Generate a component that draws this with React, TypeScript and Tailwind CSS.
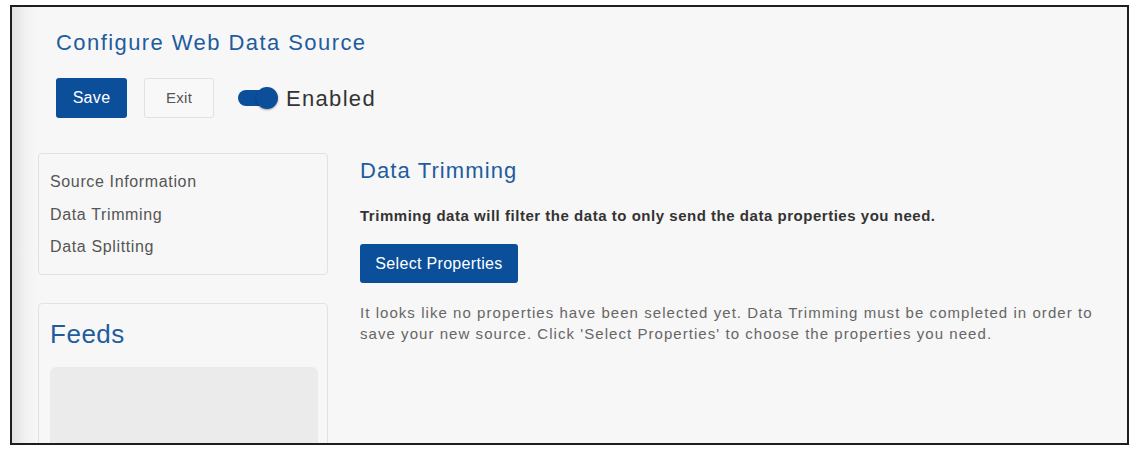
import React, { useState } from 'react';

const NAV_ITEMS = ['Source Information', 'Data Trimming', 'Data Splitting'];

const Toggle: React.FC<{ on: boolean; onChange: (v: boolean) => void }> = ({ on, onChange }) => (
  <button
    onClick={() => onChange(!on)}
    className="relative w-[40px] h-[22px] flex items-center"
  >
    <span className="w-[38px] h-[16px] rounded-full bg-[#0b4f9a]" />
    <span className="absolute right-0 top-0 w-[22px] h-[22px] rounded-full bg-[#0b4f9a] shadow-[0_1px_2px_rgba(0,0,0,0.35)]" />
  </button>
);

const App: React.FC = () => {
  const [enabled, setEnabled] = useState(true);

  return (
    <div className="w-[1138px] h-[451px] bg-white pt-[5px] pl-[10px] font-['Liberation_Sans',sans-serif] tracking-[0.04em]">
      <div className="w-[1119px] h-[440px] border-2 border-[#1e1e1e] overflow-hidden bg-[linear-gradient(to_right,#e2e2e2,#f2f2f2_14px,#f7f7f7_26px)]">
        <div className="pl-[44px] pt-[22px]">
          <h1 className="text-[22px] leading-[28px] text-[#1f5c9e] tracking-[0.065em]">Configure Web Data Source</h1>
          <div className="flex items-center mt-[21px]">
            <button className="w-[71px] h-[40px] rounded-[3px] bg-[#0b4f9a] text-white text-[16px] tracking-[0.02em]">Save</button>
            <button className="ml-[17px] w-[70px] h-[40px] rounded-[3px] border border-[#e2e2e2] bg-[#f8f8f8] text-[#555] text-[15px] tracking-[0.02em]">Exit</button>
            <div className="ml-[24px]">
              <Toggle on={enabled} onChange={setEnabled} />
            </div>
            <span className="ml-[8px] text-[22px] text-[#333] tracking-[0.06em]">Enabled</span>
          </div>
        </div>

        <div className="flex pl-[26px] mt-[35px]">
          <div className="w-[290px] flex flex-col gap-[28px]">
            <nav className="border border-[#e2e2e2] rounded-[4px] bg-[#f7f7f7] pl-[11px] pt-[18px] pb-[16px] flex flex-col gap-[12px]">
              {NAV_ITEMS.map(item => (
                <a key={item} className="text-[16px] leading-[20.5px] text-[#555] cursor-pointer">{item}</a>
              ))}
            </nav>
            <div className="border border-[#e2e2e2] rounded-[4px] bg-[#f7f7f7] h-[200px] pl-[11px] pr-[9px] pt-[13px]">
              <h2 className="text-[26px] leading-[34px] text-[#1f5c9e] tracking-[0.02em]">Feeds</h2>
              <div className="mt-[16px] h-[140px] rounded-[6px] bg-[#ebebeb]" />
            </div>
          </div>

          <div className="ml-[32px] flex-1 pr-[20px] pt-[4px]">
            <h3 className="text-[22px] leading-[28px] text-[#1f5c9e] tracking-[0.05em]">Data Trimming</h3>
            <p className="mt-[21px] text-[15px] leading-[20px] font-bold text-[#333] tracking-[0.035em]">
              Trimming data will filter the data to only send the data properties you need.
            </p>
            <button className="mt-[18px] w-[158px] h-[39px] rounded-[3px] bg-[#0b4f9a] text-white text-[16px] tracking-[0.02em]">Select Properties</button>
            <p className="mt-[19px] text-[15px] leading-[21px] text-[#666] w-[745px] tracking-[0.07em]">
              It looks like no properties have been selected yet. Data Trimming must be completed in order to save your new source. Click 'Select Properties' to choose the properties you need.
            </p>
          </div>
        </div>
      </div>
    </div>
  );
};

export default App;
